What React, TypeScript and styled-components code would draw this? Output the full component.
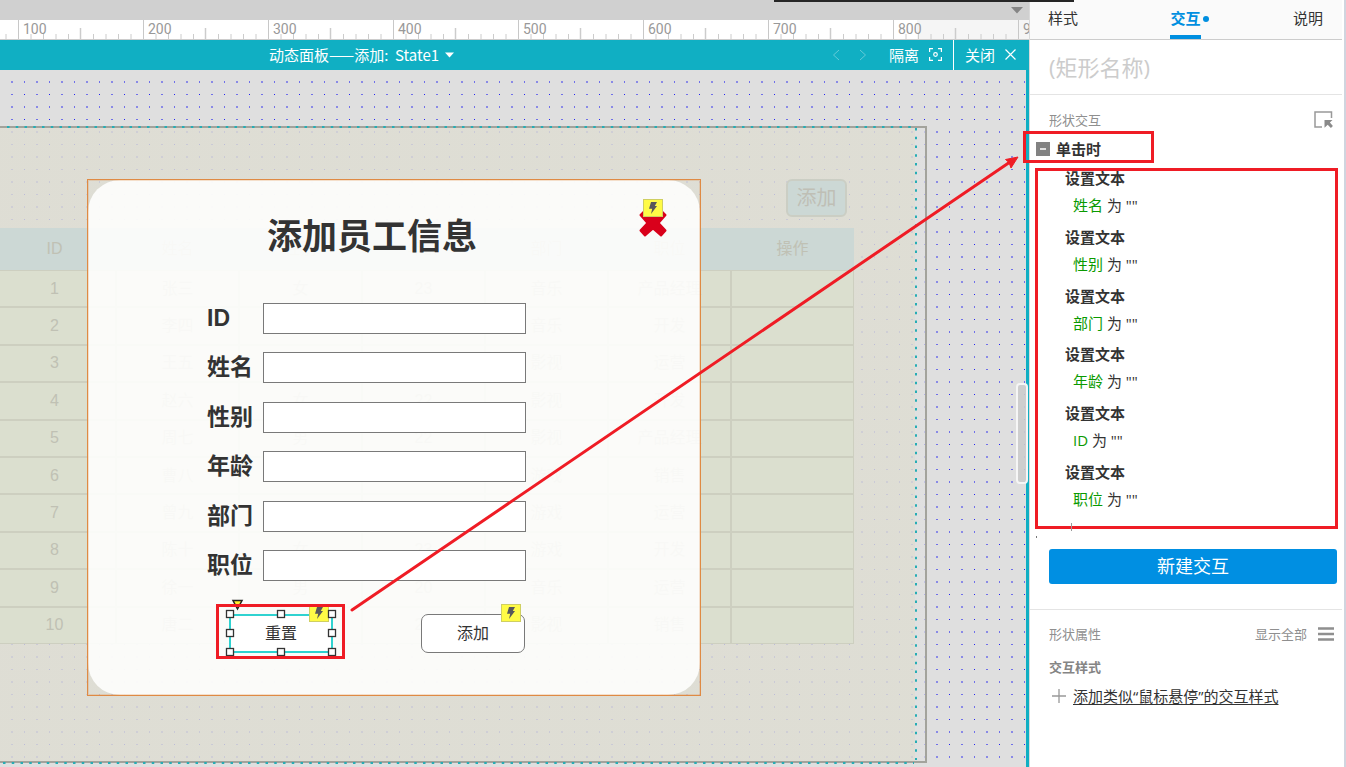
import React from "react";
import styled, { createGlobalStyle } from "styled-components";

const sans = `"Open Sans", "Noto Sans CJK SC", sans-serif`;
const arial = `"Liberation Sans", "Noto Sans CJK SC", sans-serif`;
const teal = "#10afc3";
const red = "#ef1c25";

const GlobalStyle = createGlobalStyle`
  *, *::before, *::after { box-sizing: border-box; }
  body { margin: 0; background: #fff; font-family: ${sans}; color: #333; overflow: hidden; }
  button, input { font-family: inherit; color: inherit; margin: 0; }
  button { cursor: pointer; }
  svg { display: block; }
`;

const Shell = styled.div`
  position: relative;
  display: flex;
  height: 100vh;
  overflow: hidden;
`;

/* ---------- workspace ---------- */

const Workspace = styled.main`
  flex: 1;
  min-width: 0;
  display: flex;
  flex-direction: column;
  border-right: 1px solid #dadada;
`;

const TabStrip = styled.div`
  height: 20px;
  flex: none;
  display: flex;
  justify-content: flex-end;
  align-items: center;
  padding-right: 6px;
  background: #d0d0d0;
`;

const Ruler = styled.div`
  position: relative;
  height: 20px;
  flex: none;
  display: flex;
  padding-left: 18px;
  overflow: hidden;
  background: linear-gradient(90deg, #fff 917px, #f5f5f5 917px);
  border-bottom: 1px solid #ccc;
`;

const RulerTicks = styled.svg`
  position: absolute;
  inset: 0;
`;

const RulerLabel = styled.span`
  flex: 0 0 125px;
  padding-left: 5px;
  font: 14px/19px Roboto, sans-serif;
  color: #999;
`;

const PanelBar = styled.div`
  height: 30px;
  flex: none;
  display: flex;
  align-items: center;
  background: ${teal};
  color: #fff;
  font-size: 15px;
  line-height: 20px;
`;

const StatePicker = styled.button`
  display: flex;
  align-items: center;
  gap: 6px;
  height: 30px;
  margin: 0 auto 0 269px;
  padding: 0 0 1px;
  border: 0;
  background: none;
  color: #fff;
  font: 15px/20px "Noto Sans CJK SC", sans-serif;
  && { font-family: "Noto Sans CJK SC", sans-serif; }
  white-space: pre;
`;

const BarButton = styled.button<{ $gap: number }>`
  display: flex;
  align-items: center;
  gap: ${(p) => p.$gap}px;
  height: 30px;
  padding: 0 11px 1px;
  border: 0;
  background: none;
  color: #fff;
  font-size: 15px;
  line-height: 20px;
`;

const CloseButton = styled(BarButton)`
  border-left: 1px solid #fff;
  padding-right: 13px;
`;

const StepButton = styled.button`
  padding: 0 8px;
  margin-right: 3px;
  border: 0;
  background: none;
  opacity: 0.35;
`;

const Canvas = styled.div`
  position: relative;
  flex: 1;
  min-height: 0;
  overflow: hidden;
  background: #dfdfdf;
  border-right: 3px solid ${teal};
`;

const Layer = styled.svg`
  position: absolute;
  inset: 0;
`;

const Sheet = styled.div`
  position: absolute;
  left: 0;
  top: 56px;
  width: 927px;
  height: 637px;
  border: 2px solid #a3a39c;
  border-left: 0;
  background: linear-gradient(90deg, rgba(222, 221, 210, 0.82) 915px, rgba(224, 224, 224, 0.75) 915px);
`;

const GhostButton = styled.button`
  position: absolute;
  left: 786px;
  top: 109px;
  width: 61px;
  height: 38px;
  padding: 0 0 1px;
  border: 2px solid #cbcec4;
  border-radius: 6px;
  background: #ccd8d5;
  color: #bfbfb5;
  font-size: 20px;
  line-height: 24px;
`;

const StaffTable = styled.table`
  position: absolute;
  left: -7px;
  top: 158px;
  width: 861px;
  height: 416px;
  table-layout: fixed;
  border-spacing: 0;
  background: #dbdfcf;
  color: #c0c1b4;
  font: 16px/20px ${arial};
  text-align: center;
`;

const HeadCell = styled.th`
  height: 42px;
  padding: 0;
  background: #ccd8d5;
  font-weight: 400;
`;

const Cell = styled.td`
  padding: 0;
  border: 1px solid #cdcfc0;
`;

const Dialog = styled.section`
  position: absolute;
  left: 87px;
  top: 109px;
  width: 614px;
  height: 517px;
  border: 1px solid #df8a44;
  outline: 1px solid rgba(223, 138, 68, 0.25);
  outline-offset: -2px;
`;

const DialogCard = styled.form`
  height: 100%;
  padding: 31px 0 0 119px;
  border-radius: 32px;
  background: rgba(254, 254, 253, 0.9);
`;

const DialogTitle = styled.h1`
  margin: 0 0 0 60px;
  font: 700 35px/50px ${sans};
`;

const Fields = styled.div`
  display: flex;
  flex-direction: column;
  justify-content: space-between;
  height: 278px;
  margin-top: 42px;
`;

const Field = styled.label`
  display: flex;
  align-items: center;
  font: 700 23px/31px ${arial};
`;

const FieldName = styled.span`
  width: 56px;
`;

const FieldInput = styled.input`
  width: 263px;
  height: 31px;
  border: 1px solid #797979;
  background: #fff;
  padding: 0 6px;
  font-size: 16px;
`;

const DialogActions = styled.div`
  display: flex;
  gap: 88px;
  margin: 33px 0 0 22px;
`;

const ActionSlot = styled.div`
  position: relative;
`;

const ActionButton = styled.button<{ $selected?: boolean }>`
  width: 104px;
  height: 39px;
  padding: 0 0 1px;
  border: ${(p) => (p.$selected ? "2px solid #2fd2d0" : "1px solid #797979")};
  border-radius: ${(p) => (p.$selected ? 0 : 7)}px;
  background: #fff;
  font-size: 16px;
  line-height: 20px;
`;

const Badge = styled.span`
  position: absolute;
  right: 4px;
  top: -10px;
  display: grid;
  place-items: center;
  width: 20px;
  height: 18px;
  border: 1px solid #cfcf62;
  background: #fffb46;
`;

const Handles = styled.svg`
  position: absolute;
  left: -5px;
  top: -15px;
`;

const CloseMark = styled.button`
  position: absolute;
  right: 33px;
  top: 29px;
  width: 28px;
  height: 28px;
  padding: 0;
  border: 0;
  background: none;
`;

const ScrollThumb = styled.div`
  position: absolute;
  right: 318px;
  top: 383px;
  width: 12px;
  height: 101px;
  border: 2px solid #f6f6f6;
  border-radius: 4px;
  background: rgba(204, 204, 204, 0.9);
`;

/* ---------- inspector ---------- */

const Inspector = styled.aside`
  width: 316px;
  flex: none;
  padding-right: 2px;
  border-right: 2px solid #d0d5df;
  background: #fff;
`;

const Tabs = styled.nav`
  display: flex;
  justify-content: space-between;
  height: 40px;
  padding: 0 19px 0 18px;
  background: #fafafa;
  border-bottom: 1px solid #ccc;
`;

const Tab = styled.button<{ $active?: boolean }>`
  position: relative;
  height: 39px;
  padding: 2px 0 0;
  border: 0;
  border-bottom: 4px solid ${(p) => (p.$active ? "#008fe0" : "transparent")};
  background: none;
  color: ${(p) => (p.$active ? "#008fe0" : "#333")};
  font-size: 15px;
  font-weight: ${(p) => (p.$active ? 700 : 400)};
  line-height: 33px;
`;

const TabDot = styled.span`
  position: absolute;
  left: 33px;
  top: 16px;
  width: 6px;
  height: 6px;
  border-radius: 50%;
  background: #008fe0;
`;

const NameInput = styled.input`
  display: block;
  width: 100%;
  height: 55px;
  padding: 0 19px;
  border: 0;
  border-bottom: 1px solid #e4e4e4;
  background: #fff;
  font-size: 22px;
  &::placeholder { color: #ccc; opacity: 1; }
`;

const SectionHead = styled.div`
  display: flex;
  align-items: center;
  gap: 11px;
  padding: 0 8px 0 19px;
  color: #8f8f8f;
  font-size: 13px;
  line-height: 20px;
`;

const SectionTitle = styled.h2`
  flex: 1;
  margin: 0;
  font-size: 13px;
  font-weight: 400;
  line-height: 20px;
`;

const TextButton = styled.button`
  padding: 0;
  border: 0;
  background: none;
  font-size: 13px;
  line-height: 20px;
`;

const PickButton = styled(TextButton)`
  margin-right: 1px;
`;

const Interactions = styled.section`
  padding-top: 15px;
`;

const EventRow = styled.div`
  position: relative;
  display: flex;
  align-items: center;
  gap: 6px;
  height: 32px;
  margin: 1px 0 5px;
  padding: 3px 0 0 6px;
  font-size: 15px;
  font-weight: 700;
`;

const EventMark = styled.div`
  position: absolute;
  left: -7px;
  top: 0;
  width: 131px;
  height: 32px;
  border: 3px solid ${red};
`;

const Toggle = styled.button`
  display: grid;
  place-items: center;
  width: 14px;
  height: 14px;
  padding: 0;
  border: 0;
  background: #828282;
`;

const ActionList = styled.ul`
  position: relative;
  display: flex;
  flex-direction: column;
  justify-content: space-between;
  height: 361px;
  margin: 0 4px 0 5px;
  padding: 0 0 20px 30px;
  list-style: none;
  font-size: 15px;
`;

const ListMark = styled.div`
  position: absolute;
  inset: 0;
  border: 3px solid ${red};
`;

const ListStubs = styled.svg`
  position: absolute;
  left: 0;
  bottom: -9px;
`;

const Action = styled.li`
  display: flex;
  flex-direction: column;
  gap: 7px;
  line-height: 20px;
`;

const ActionName = styled.strong`
  font-weight: 700;
`;

const ActionTarget = styled.span`
  padding-left: 8px;
`;

const Target = styled.span`
  color: #0a9a00;
`;

const PrimaryButton = styled.button`
  display: block;
  width: calc(100% - 24px);
  height: 35px;
  margin: 20px 5px 25px 19px;
  padding: 0 0 2px;
  border: 0;
  border-radius: 3px;
  background: #008fe2;
  color: #fff;
  font-size: 18px;
  line-height: 24px;
`;

const Properties = styled.section`
  padding-top: 14px;
  border-top: 1px solid #e4e4e4;
`;

const StyleTitle = styled.h3`
  margin: 13px 0 8px 19px;
  color: #858585;
  font-size: 13px;
  font-weight: 700;
  line-height: 20px;
`;

const AddStyle = styled.a`
  display: flex;
  align-items: center;
  gap: 7px;
  padding-left: 22px;
  color: #333;
  font-size: 15px;
  line-height: 22px;
  text-decoration: none;
  span { text-decoration: underline; text-underline-offset: 2px; }
`;

const TopShadow = styled.div`
  position: absolute;
  left: 774px;
  top: 0;
  width: 300px;
  height: 2px;
  background: #262626;
`;

const ArrowLayer = styled.svg`
  position: absolute;
  left: 0;
  top: 0;
  pointer-events: none;
`;

const ResetMark = styled.div`
  position: absolute;
  left: -13px;
  top: -10px;
  width: 129px;
  height: 55px;
  border: 3px solid ${red};
`;

const ticks = [100, 200, 300, 400, 500, 600, 700, 800, 900];
const heads = ["ID", "姓名", "性别", "年龄", "部门", "职位", "操作"];
const staff = [
  ["1", "张三", "女", "23", "音乐", "产品经理", ""],
  ["2", "李四", "", "", "音乐", "开发", ""],
  ["3", "王五", "", "", "影视", "运营", ""],
  ["4", "赵六", "女", "22", "影视", "开发", ""],
  ["5", "周七", "男", "22", "影视", "产品经理", ""],
  ["6", "曹八", "", "", "游戏", "销售", ""],
  ["7", "曾九", "", "", "游戏", "运营", ""],
  ["8", "陈十", "女", "23", "游戏", "开发", ""],
  ["9", "徐一", "男", "20", "音乐", "运营", ""],
  ["10", "唐二", "", "21", "影视", "销售", ""],
];
const fields = ["ID", "姓名", "性别", "年龄", "部门", "职位"];
const targets = ["姓名", "性别", "部门", "年龄", "ID", "职位"];

function Bolt() {
  return (
    <Badge>
      <svg width="10" height="12" viewBox="0 0 10 12" aria-hidden="true">
        <path d="M3 0h6L6.8 4H9L3 12l1.2-5.2H1z" fill="#57575b" />
      </svg>
    </Badge>
  );
}

function SelectionHandles() {
  const points = [6, 57, 108].flatMap((x) => [15, 34, 53].map((y) => [x, y])).filter(([x, y]) => x !== 57 || y !== 34);
  return (
    <Handles width="118" height="62" aria-hidden="true">
      <path d="M9 1.500h9L13.500 10z" fill="#fff22e" stroke="#222" strokeWidth="1.500" />
      {points.map(([x, y]) => (
        <rect key={`${x}-${y}`} x={x - 3.5} y={y - 3.5} width="7" height="7" fill="#fff" stroke="#333" strokeWidth="1.300" />
      ))}
    </Handles>
  );
}

function CanvasGrid() {
  return (
    <Layer width="100%" height="692" aria-hidden="true">
      <defs>
        <pattern id="dots" width="25" height="25" patternUnits="userSpaceOnUse">
          <g fill="#2424f0">
            <rect x="24" y="24" width="1" height="1" />
            <rect x="11" y="24" width="2" height="1" opacity="0.600" />
            <rect x="24" y="11" width="1" height="2" opacity="0.600" />
            <rect x="11" y="11" width="2" height="2" opacity="0.450" />
          </g>
        </pattern>
      </defs>
      <rect width="100%" height="692" fill="url(#dots)" />
    </Layer>
  );
}

function DashedGuides() {
  return (
    <Layer width="100%" height="100%" aria-hidden="true">
      <g stroke="#26adb5" strokeWidth="2" strokeDasharray="2.500 6.250" fill="none">
        <path d="M7 57H912M916 58V690M3 693H914" />
      </g>
    </Layer>
  );
}

export default function App() {
  return (
    <Shell>
      <GlobalStyle />
      <Workspace>
        <TabStrip>
          <svg width="12" height="7" aria-hidden="true"><path d="M0 0h12L6 6.500z" fill="#858585" /></svg>
        </TabStrip>
        <Ruler>
          <RulerTicks width="100%" height="19" aria-hidden="true">
            <defs>
              <pattern id="ticks" x="18" width="125" height="19" patternUnits="userSpaceOnUse">
                <path d="M.5 0V19" stroke="#c8c8c8" />
                <path d="M62.500 8V19" stroke="#ccc" strokeWidth="1.500" />
                <path d="M13 14V19M25.500 14V19M38 14V19M50.500 14V19M75.500 14V19M88 14V19M100.500 14V19M113 14V19" stroke="#ccc" />
              </pattern>
            </defs>
            <rect width="100%" height="19" fill="url(#ticks)" />
          </RulerTicks>
          {ticks.map((t) => <RulerLabel key={t}>{t}</RulerLabel>)}
        </Ruler>
        <PanelBar>
          <StatePicker type="button">
            动态面板——添加:  State1
            <svg width="9" height="6" aria-hidden="true"><path d="M0 .5h9L4.500 5.500z" fill="#fff" /></svg>
          </StatePicker>
          <StepButton type="button" aria-label="上一个">
            <svg width="8" height="12" fill="none" stroke="#fff"><path d="M7 1L1.500 6 7 11" /></svg>
          </StepButton>
          <StepButton type="button" aria-label="下一个">
            <svg width="8" height="12" fill="none" stroke="#fff"><path d="M1 1l5.500 5L1 11" /></svg>
          </StepButton>
          <BarButton type="button" $gap={10}>
            隔离
            <svg width="13" height="13" fill="none" stroke="#fff" strokeWidth="1.200" aria-hidden="true">
              <path d="M4 .6H.6V4M9 .6h3.400V4M.6 9v3.400H4M12.400 9v3.400H9" />
              <circle cx="6.500" cy="6.500" r="1.800" />
            </svg>
          </BarButton>
          <CloseButton type="button" $gap={10}>
            关闭
            <svg width="11" height="11" stroke="#fff" strokeWidth="1.200" aria-hidden="true">
              <path d="M.5.5l10 10M10.500.5l-10 10" />
            </svg>
          </CloseButton>
        </PanelBar>
        <Canvas>
          <CanvasGrid />
          <Sheet />
          <DashedGuides />
          <GhostButton type="button">添加</GhostButton>
          <StaffTable>
            <thead>
              <tr>{heads.map((h) => <HeadCell key={h}>{h}</HeadCell>)}</tr>
            </thead>
            <tbody>
              {staff.map((row) => (
                <tr key={row[0]}>{row.map((c, i) => <Cell key={i}>{c}</Cell>)}</tr>
              ))}
            </tbody>
          </StaffTable>
          <Dialog>
            <DialogCard>
              <DialogTitle>添加员工信息</DialogTitle>
              <Fields>
                {fields.map((f) => (
                  <Field key={f}>
                    <FieldName>{f}</FieldName>
                    <FieldInput type="text" />
                  </Field>
                ))}
              </Fields>
              <DialogActions>
                <ActionSlot>
                  <ActionButton type="button" $selected>重置</ActionButton>
                  <Bolt />
                  <SelectionHandles />
                  <ResetMark />
                </ActionSlot>
                <ActionSlot>
                  <ActionButton type="button">添加</ActionButton>
                  <Bolt />
                </ActionSlot>
              </DialogActions>
            </DialogCard>
            <CloseMark type="button" aria-label="删除">
              <svg width="28" height="28" aria-hidden="true">
                <path
                  d="M6 1.500L14 8.500 22 1.500 26.500 6 19.500 14 26.500 21.500 22 26.500 14 19.500 6 26.500 1.500 21.500 8.500 14 1.500 6z"
                  fill="#d9001b" stroke="#d9001b" strokeWidth="2" strokeLinejoin="round"
                />
              </svg>
              <Bolt />
            </CloseMark>
          </Dialog>
        </Canvas>
      </Workspace>

      <Inspector>
        <Tabs>
          <Tab type="button">样式</Tab>
          <Tab type="button" $active>交互<TabDot /></Tab>
          <Tab type="button">说明</Tab>
        </Tabs>
        <NameInput aria-label="矩形名称" placeholder="(矩形名称)" />
        <Interactions>
          <SectionHead>
            <SectionTitle>形状交互</SectionTitle>
            <PickButton type="button" aria-label="选择元件">
              <svg width="19" height="18" fill="none" aria-hidden="true">
                <path d="M17.500 7V1H1v15h7" stroke="#999" strokeWidth="1.500" />
                <path d="M10.500 9h8l-2.600 2.600 3 3.400-2 2-3.200-3.200-3.200 3z" fill="#8a8a8a" />
              </svg>
            </PickButton>
          </SectionHead>
          <EventRow>
            <Toggle type="button" aria-label="折叠">
              <svg width="6" height="2"><path d="M0 1h6" stroke="#fff" strokeWidth="1.500" /></svg>
            </Toggle>
            单击时
            <EventMark />
          </EventRow>
          <ActionList>
            {targets.map((t) => (
              <Action key={t}>
                <ActionName>设置文本</ActionName>
                <ActionTarget><Target>{t}</Target> 为 ""</ActionTarget>
              </Action>
            ))}
            <ListMark />
            <ListStubs width="40" height="16" aria-hidden="true">
              <path d="M36.500 1v8" stroke="#999" />
              <path d="M1.500 14v2" stroke="#777" />
            </ListStubs>
          </ActionList>
          <PrimaryButton type="button">新建交互</PrimaryButton>
        </Interactions>
        <Properties>
          <SectionHead>
            <SectionTitle>形状属性</SectionTitle>
            <TextButton type="button">显示全部</TextButton>
            <svg width="16" height="14" aria-hidden="true"><path d="M0 1.500h16M0 7h16M0 12.500h16" stroke="#8f8f8f" strokeWidth="2.500" /></svg>
          </SectionHead>
          <StyleTitle>交互样式</StyleTitle>
          <AddStyle href="#">
            <svg width="14" height="14" aria-hidden="true"><path d="M7 0v14M0 7h14" stroke="#999" strokeWidth="1.300" /></svg>
            <span>添加类似“鼠标悬停”的交互样式</span>
          </AddStyle>
        </Properties>
      </Inspector>

      <TopShadow />
      <ArrowLayer width="1030" height="620" aria-hidden="true">
        <path d="M352 610L1010 162" stroke={red} strokeWidth="3" strokeLinecap="round" />
        <path d="M1018 157L1005.500 159.500 1009 162.500 1011 168z" fill={red} stroke={red} />
      </ArrowLayer>
      <ScrollThumb />
    </Shell>
  );
}
